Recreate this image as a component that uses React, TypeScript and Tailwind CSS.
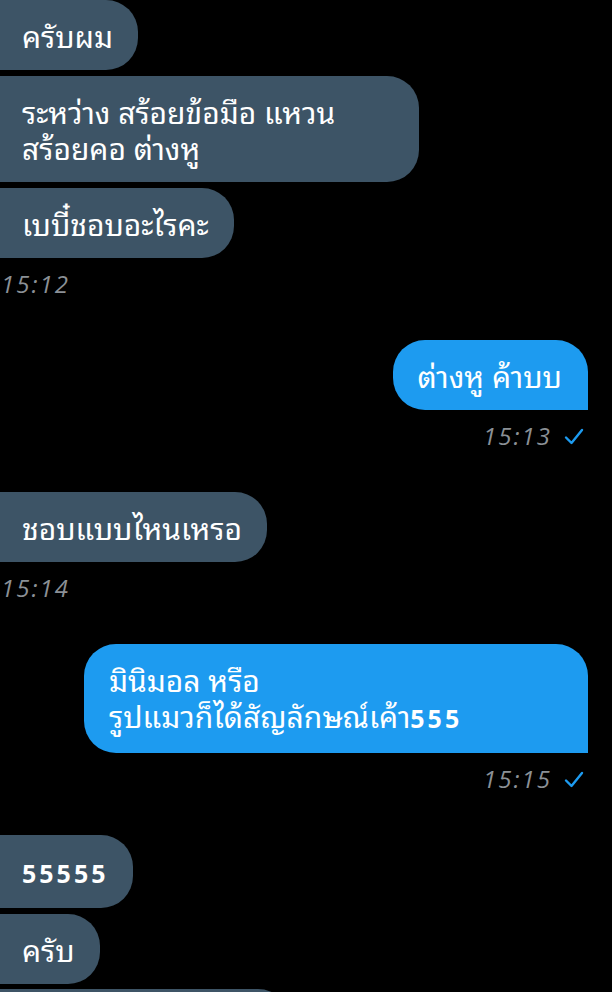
import React from "react";

type Msg =
  | { kind: "in"; lines: React.ReactNode[]; w?: string }
  | { kind: "out"; lines: React.ReactNode[]; w?: string }
  | { kind: "time"; side: "in" | "out"; time: string };

const THAI = { fontFamily: '"Noto Sans Thai Looped", "Noto Sans Thai", "Noto Sans", "DejaVu Sans", sans-serif' };
const HAND = { fontFamily: '"Open Sans", "Noto Sans", sans-serif' };

function Digits({ children }: { children: string }) {
  return (
    <span className="font-bold tracking-[3px] text-[25px]" style={HAND}>
      {children}
    </span>
  );
}

// bubbles that wrapped keep the full max width
const MESSAGES: Msg[] = [
  { kind: "in", lines: ["ครับผม"] },
  { kind: "in", lines: ["ระหว่าง สร้อยข้อมือ แหวน", "สร้อยคอ ต่างหู"], w: "w-[419px]" },
  { kind: "in", lines: ["เบบี๋ชอบอะไรคะ"] },
  { kind: "time", side: "in", time: "15:12" },
  { kind: "out", lines: ["ต่างหู ค้าบบ"] },
  { kind: "time", side: "out", time: "15:13" },
  { kind: "in", lines: ["ชอบแบบไหนเหรอ"] },
  { kind: "time", side: "in", time: "15:14" },
  {
    kind: "out",
    lines: [
      "มินิมอล หรือ",
      <>
        รูปแมวก็ได้สัญลักษณ์เค้า<Digits>555</Digits>
      </>,
    ],
    w: "w-[504px]",
  },
  { kind: "time", side: "out", time: "15:15" },
  { kind: "in", lines: [<Digits key="d">55555</Digits>] },
  { kind: "in", lines: ["ครับ"] },
];

function Check() {
  return (
    <svg width="20" height="20" viewBox="0 0 20 20" fill="none">
      <path d="M2 11.5 L7.5 17 L18 4" stroke="#1d9bf0" strokeWidth="2.4" strokeLinecap="round" strokeLinejoin="round" />
    </svg>
  );
}

export default function App() {
  return (
    <div className="w-[612px] h-[992px] overflow-hidden bg-black text-white" style={THAI}>
      <div className="flex flex-col">
        {MESSAGES.map((m, i) => {
          if (m.kind === "time") {
            return m.side === "in" ? (
              <div key={i} className="h-[28px] mt-[12px] mb-[42px] pl-[1px] flex items-center">
                <span className="italic text-[24px] tracking-[2px] text-[#8b9096]" style={HAND}>
                  {m.time}
                </span>
              </div>
            ) : (
              <div key={i} className="h-[28px] mt-[12px] mb-[42px] pr-[28px] flex items-center justify-end gap-[12px]">
                <span className="italic text-[24px] tracking-[2px] text-[#8b9096]" style={HAND}>
                  {m.time}
                </span>
                <Check />
              </div>
            );
          }
          const next = MESSAGES[i + 1];
          const gap = next && next.kind === m.kind ? "mb-[6px]" : "";
          if (m.kind === "in") {
            return (
              <div key={i} className={`flex ${gap}`}>
                <div className={`bg-[#3d5466] rounded-r-[32px] pl-[22px] pr-[25px] py-[17px] text-[30px] leading-[36px] ${m.w ?? ""}`}>
                  {m.lines.map((l, j) => (
                    <div key={j}>{l}</div>
                  ))}
                </div>
              </div>
            );
          }
          return (
            <div key={i} className={`flex justify-end pr-[24px] ${gap}`}>
              <div className={`bg-[#1d9bf0] rounded-[32px] rounded-br-none pl-[25px] pr-[26px] py-[17px] text-[30px] leading-[36px] ${m.w ?? ""}`}>
                {m.lines.map((l, j) => (
                  <div key={j}>{l}</div>
                ))}
              </div>
            </div>
          );
        })}
        <div className="flex mt-[5px]">
          <div className="bg-[#3d5466] rounded-tr-[32px] w-[290px] h-[60px]" />
        </div>
      </div>
    </div>
  );
}
